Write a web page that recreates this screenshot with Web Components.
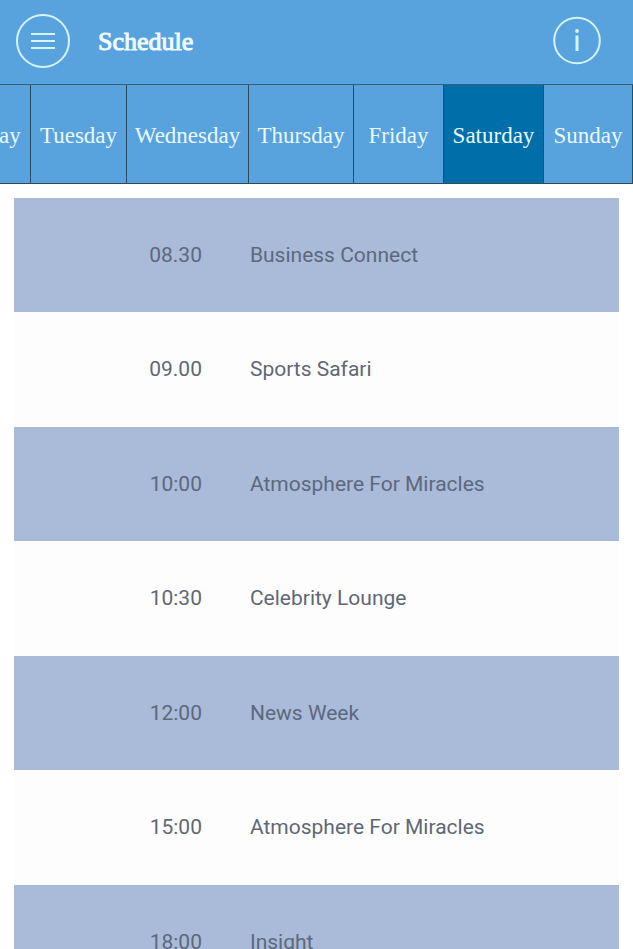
<!DOCTYPE html>
<html lang="en">
<head>
<meta charset="utf-8">
<meta name="viewport" content="width=device-width, initial-scale=1">
<title>Schedule</title>
<style>
	body {
		margin: 0;
		background: #fff;
		font-family: Roboto, sans-serif;
	}
</style>
</head>
<body>
<app-header>
	<icon-button slot="start" label="Menu">
		<svg width="54" height="54" viewBox="0 0 54 54" fill="none" stroke="#d6f4ff" stroke-width="2">
			<circle cx="27" cy="27" r="26" />
			<path d="M15 20H39M15 27H39M15 34H39" />
		</svg>
	</icon-button>
	Schedule
	<icon-button slot="end" label="Information">
		<svg width="48" height="54" viewBox="0 0 48 54" fill="none" stroke="#d6f4ff" stroke-width="2">
			<circle cx="24" cy="26.5" r="22.8" />
			<path d="M24 21.5V37" stroke-width="3" />
			<circle cx="24" cy="17" r="1.9" fill="#d6f4ff" stroke="none" />
		</svg>
	</icon-button>
</app-header>
<day-tabs selected="Saturday"></day-tabs>
<schedule-list></schedule-list>

<script>
class IconButton extends HTMLElement {
	constructor() {
		super();

		this.attachShadow({ mode: "open" });
		this.shadowRoot.append(IconButton.template.content.cloneNode(true));
	}

	connectedCallback() {
		this.shadowRoot
			.querySelector("button")
			.setAttribute("aria-label", this.getAttribute("label"));
	}
}

IconButton.template = document.createElement("template");
IconButton.template.innerHTML = `
<style>
	:host {
		display: block;
	}

	button {
		display: block;
		padding: 0;
		border: 0;
		background: none;
		cursor: pointer;
	}

	::slotted(svg) {
		display: block;
	}
</style>

<button type="button"><slot></slot></button>
`;

customElements.define("icon-button", IconButton);

class AppHeader extends HTMLElement {
	constructor() {
		super();

		this.attachShadow({ mode: "open" });
		this.shadowRoot.append(AppHeader.template.content.cloneNode(true));
	}
}

AppHeader.template = document.createElement("template");
AppHeader.template.innerHTML = `
<style>
	:host {
		display: block;
		background: #58a2dd;
	}

	header {
		display: flex;
		align-items: flex-start;
		gap: 28px;
		padding: 14px 32px 14px 16px;
	}

	h1 {
		flex: 1;
		margin: 0;
		color: #f0fbff;
		font: 400 26px/56px "Liberation Serif", serif;
		-webkit-text-stroke: 1px #f0fbff;
	}
</style>

<header>
	<slot name="start"></slot>
	<h1><slot></slot></h1>
	<slot name="end"></slot>
</header>
`;

customElements.define("app-header", AppHeader);

class DayTabs extends HTMLElement {
	constructor() {
		super();

		this.attachShadow({ mode: "open" });
		this.shadowRoot.append(DayTabs.template.content.cloneNode(true));

		for (let tab of this.shadowRoot.querySelectorAll("button")) {
			tab.addEventListener("click", () => this.select(tab.textContent));
		}
	}

	connectedCallback() {
		this.select(this.getAttribute("selected"));

		// start with the end of the week in view
		const nav = this.shadowRoot.querySelector("nav");
		nav.scrollLeft = nav.scrollWidth;
	}

	select(day) {
		for (let tab of this.shadowRoot.querySelectorAll("button")) {
			tab.classList.toggle("active", tab.textContent === day);
		}
	}
}

DayTabs.template = document.createElement("template");
DayTabs.template.innerHTML = `
<style>
	:host {
		display: block;
		background: #58a2dd;
	}

	nav {
		display: grid;
		grid-template-columns: 96px 96px 122px 105px 90px 100px minmax(89px, 1fr);
		overflow-x: auto;
		scrollbar-width: none;
		border-top: 1px solid #34607f;
		border-bottom: 1px solid #2c4a60;
	}

	button {
		height: 98px;
		padding: 4px 0 0;
		border: 0;
		border-right: 1px solid #2c4a60;
		background: none;
		color: #e8f9ff;
		font: 23px/28px "Liberation Serif", serif;
		cursor: pointer;
	}

	button.active {
		background: #006ea8;
	}
</style>

<nav aria-label="Days">
	<button type="button">Monday</button>
	<button type="button">Tuesday</button>
	<button type="button">Wednesday</button>
	<button type="button">Thursday</button>
	<button type="button">Friday</button>
	<button type="button">Saturday</button>
	<button type="button">Sunday</button>
</nav>
`;

customElements.define("day-tabs", DayTabs);

const programmes = [
	["08.30", "Business Connect"],
	["09.00", "Sports Safari"],
	["10:00", "Atmosphere For Miracles"],
	["10:30", "Celebrity Lounge"],
	["12:00", "News Week"],
	["15:00", "Atmosphere For Miracles"],
	["18:00", "Insight"],
];

class ScheduleList extends HTMLElement {
	constructor() {
		super();

		this.attachShadow({ mode: "open" });
		this.shadowRoot.append(ScheduleList.template.content.cloneNode(true));

		const body = this.shadowRoot.querySelector("tbody");

		for (let [time, title] of programmes) {
			const row = body.insertRow();
			row.insertCell().textContent = time;
			row.insertCell().textContent = title;
		}
	}
}

ScheduleList.template = document.createElement("template");
ScheduleList.template.innerHTML = `
<style>
	:host {
		display: block;
		padding: 14px;
	}

	table {
		width: 100%;
		border-spacing: 0;
		table-layout: fixed;
		color: #5f6875;
		font-size: 21px;
		line-height: 24px;
	}

	col.time {
		width: 39%;
	}

	td {
		height: 114px;
		padding: 0;
	}

	td:first-child {
		padding-right: 48px;
		text-align: right;
	}

	tr:nth-child(odd) {
		background: #aabad9;
		color: #5c697c;
	}

	tr:nth-child(even) {
		background: #fdfdfd;
	}

	tr:nth-child(even) td {
		border-bottom: 1px solid #fdfdfd;
	}
</style>

<table aria-label="Programmes">
	<colgroup>
		<col class="time">
		<col>
	</colgroup>
	<tbody></tbody>
</table>
`;

customElements.define("schedule-list", ScheduleList);
</script>
</body>
</html>
